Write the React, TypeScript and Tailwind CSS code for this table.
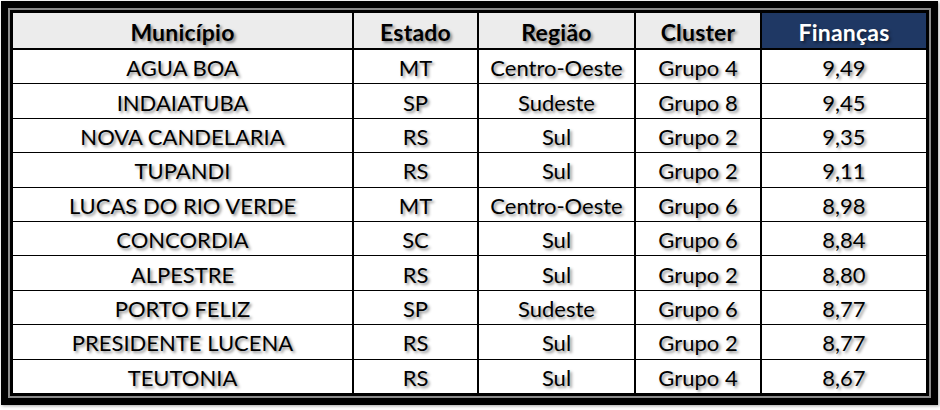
const rows = [
  ["AGUA BOA", "MT", "Centro-Oeste", "Grupo 4", "9,49"],
  ["INDAIATUBA", "SP", "Sudeste", "Grupo 8", "9,45"],
  ["NOVA CANDELARIA", "RS", "Sul", "Grupo 2", "9,35"],
  ["TUPANDI", "RS", "Sul", "Grupo 2", "9,11"],
  ["LUCAS DO RIO VERDE", "MT", "Centro-Oeste", "Grupo 6", "8,98"],
  ["CONCORDIA", "SC", "Sul", "Grupo 6", "8,84"],
  ["ALPESTRE", "RS", "Sul", "Grupo 2", "8,80"],
  ["PORTO FELIZ", "SP", "Sudeste", "Grupo 6", "8,77"],
  ["PRESIDENTE LUCENA", "RS", "Sul", "Grupo 2", "8,77"],
  ["TEUTONIA", "RS", "Sul", "Grupo 4", "8,67"],
];

const cols = "grid grid-cols-[341px_125px_157px_126px_1fr]";
const cell = "flex items-center justify-center pt-[3px] leading-none border-r-2 border-black last:border-r-0";

export default function App() {
  return (
    <div className="w-[940px] h-[410px] bg-white pl-px pt-px font-['Lato',sans-serif] text-black [text-shadow:2px_2px_3px_rgba(0,0,0,0.45)]">
      <div className="w-[937px] h-[404px] border-[7px] border-black shadow-[1px_1px_3px_rgba(0,0,0,0.35)]">
        <div className="h-full border-2 border-[#8a8a8a]">
          <div className="h-full flex flex-col overflow-hidden border-[3px] border-black bg-white">
            {/* Header */}
            <div className={`${cols} h-[37px] shrink-0 border-b-2 border-black bg-[#ececec] text-[23px] font-bold tracking-[0.2px]`}>
              <div className={cell}>Município</div>
              <div className={cell}>Estado</div>
              <div className={cell}>Região</div>
              <div className={cell}>Cluster</div>
              <div className={`${cell} bg-[#1f3864] text-white`}>Finanças</div>
            </div>

            {/* Rows */}
            {rows.map((r, i) => (
              <div
                key={i}
                className={`${cols} flex-1 min-h-0 text-[22px] ${i < rows.length - 1 ? "border-b border-black" : ""}`}
              >
                {r.map((v, j) => (
                  <div key={j} className={cell}>
                    {v}
                  </div>
                ))}
              </div>
            ))}
          </div>
        </div>
      </div>
    </div>
  );
}
